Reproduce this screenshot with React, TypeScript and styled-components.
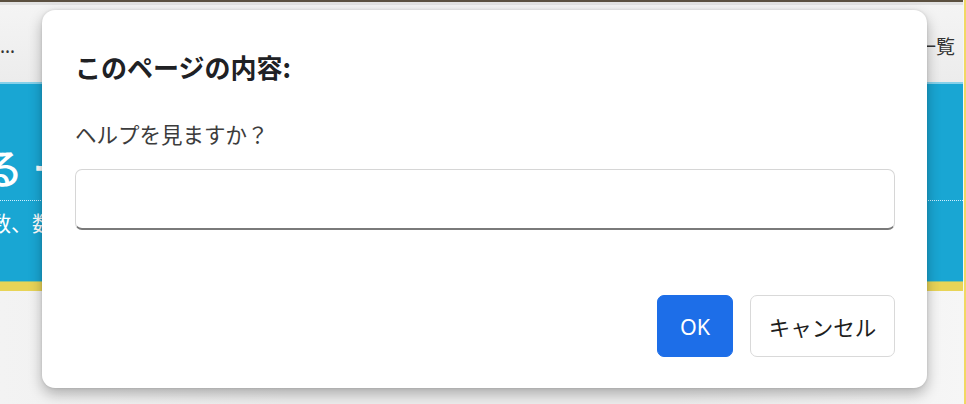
import * as React from "react";
import styled, { createGlobalStyle } from "styled-components";

const GlobalStyle = createGlobalStyle`
  html, body {
    margin: 0;
    padding: 0;
    width: 966px;
    height: 404px;
    overflow: hidden;
    background: #f6f6f6;
  }
  body {
    font-family: "Noto Sans CJK JP", "Noto Sans", sans-serif;
  }
`;

const Page = styled.div`
  position: relative;
  width: 966px;
  height: 404px;
  box-sizing: border-box;
  border-right: 2px solid #f1d864;
  padding-right: 1px;
  background: linear-gradient(90deg, #f3f3f3, #ededed 30%, #ededed 70%, #f6f6f6);
  overflow: hidden;
`;

const TopEdge = styled.div`
  height: 2px;
  background: #5b5040;
  border-bottom: 3px solid #e2e2e2;
`;

const Header = styled.header`
  height: 77px;
  display: flex;
  align-items: center;
  justify-content: space-between;
  padding: 0 8px 0 0;
  box-sizing: border-box;
  color: #333;
  font-size: 19px;
  background: linear-gradient(180deg, #f4f4f4, #ececec);
`;

const HeaderLeft = styled.span`
  font-family: "Noto Sans", sans-serif;
  letter-spacing: 1px;
  margin-top: 4px;
`;

const HeaderRight = styled.span`
  margin-top: 4px;
`;

const Hero = styled.section`
  height: 199px;
  background: #19a6d3;
  border-top: 2px solid #86d1ea;
  color: #fff;
  display: flex;
  flex-direction: column;
  box-sizing: border-box;
  padding-top: 56px;
`;

const HeroTitle = styled.div`
  font-size: 41px;
  line-height: 52px;
  font-weight: 500;
  margin-left: -18px;
  white-space: nowrap;
`;

const HeroRule = styled.div`
  margin-top: 8px;
  border-top: 1px dotted #cfefff;
`;

const HeroText = styled.div`
  font-size: 21px;
  line-height: 32px;
  margin-top: 5px;
  margin-left: -10px;
  white-space: nowrap;
`;

const Band = styled.div`
  height: 9px;
  background: #e8d457;
  border-top: 1px solid #8cc48a;
`;

const Dialog = styled.div`
  position: absolute;
  left: 42px;
  top: 10px;
  width: 885px;
  height: 378px;
  box-sizing: border-box;
  background: #fff;
  border-radius: 13px;
  box-shadow: 0 6px 14px rgba(0, 0, 0, 0.28), 0 0 3px rgba(0, 0, 0, 0.12);
  padding: 40px 32px 31px 33px;
  display: flex;
  flex-direction: column;
`;

const Title = styled.h1`
  margin: 0;
  font-size: 26px;
  line-height: 34px;
  font-weight: 700;
  color: #202124;
`;

const Message = styled.p`
  margin: 36px 0 0 0;
  font-size: 21.5px;
  line-height: 28px;
  color: #3c3c3c;
`;

const Input = styled.input`
  margin-top: 21px;
  height: 61px;
  box-sizing: border-box;
  border: 1px solid #d6d6d6;
  border-bottom: 2px solid #7a7a7a;
  border-radius: 7px;
  outline: none;
  padding: 0 14px;
  font-size: 21px;
  background: #fff;
`;

const Actions = styled.div`
  margin-top: auto;
  display: flex;
  justify-content: flex-end;
  gap: 17px;
`;

const Button = styled.button<{ $primary?: boolean }>`
  height: 62px;
  box-sizing: border-box;
  border-radius: 7px;
  font-family: "Noto Sans", "Noto Sans CJK JP", sans-serif;
  font-size: 21.5px;
  padding: 0;
  width: ${(p) => (p.$primary ? "76px" : "145px")};
  border: 1px solid ${(p) => (p.$primary ? "#1d6ee8" : "#d9d9d9")};
  background: ${(p) => (p.$primary ? "#1d6ee8" : "#fff")};
  color: ${(p) => (p.$primary ? "#fff" : "#1e1e1e")};
  cursor: pointer;
`;

export default function App() {
  return (
    <>
      <GlobalStyle />
      <Page>
        <TopEdge />
        <Header>
          <HeaderLeft>…</HeaderLeft>
          <HeaderRight>記事一覧</HeaderRight>
        </Header>
        <Hero>
          <HeroTitle>る ー</HeroTitle>
          <HeroRule />
          <HeroText>数、数</HeroText>
        </Hero>
        <Band />
        <Dialog role="dialog">
          <Title>このページの内容:</Title>
          <Message>ヘルプを見ますか？</Message>
          <Input type="text" />
          <Actions>
            <Button $primary>OK</Button>
            <Button>キャンセル</Button>
          </Actions>
        </Dialog>
      </Page>
    </>
  );
}
